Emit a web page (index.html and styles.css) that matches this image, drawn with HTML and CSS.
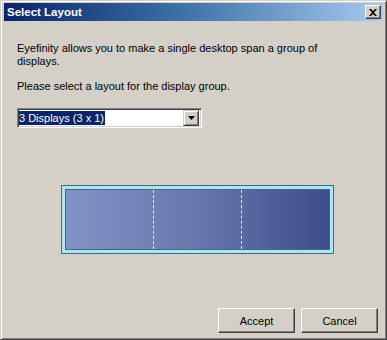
FILE: index.html
```html
<!DOCTYPE html>
<html>
<head>
<meta charset="utf-8">
<link rel="stylesheet" href="styles.css">
</head>
<body>
<div class="window">
  <div class="titlebar">
    <span class="title">Select Layout</span>
    <span class="close"><svg width="8" height="7" viewBox="0 0 8 7"><path d="M0 0h2l2 2 2-2h2L5 3.5 8 7H6L4 5 2 7H0l3-3.5z" fill="#000"/></svg></span>
  </div>
  <div class="content">
    <p class="intro">Eyefinity allows you to make a single desktop span a group of displays.</p>
    <p class="prompt">Please select a layout for the display group.</p>
    <div class="select">
      <span class="value"><span class="sel">3 Displays (3 x 1)</span></span>
      <span class="arrow"><svg width="7" height="4" viewBox="0 0 7 4"><path d="M0 0h7L3.5 4z" fill="#000"/></svg></span>
    </div>
    <div class="preview-area">
      <div class="preview">
        <div class="inner">
          <div class="cell"></div>
          <div class="cell"></div>
          <div class="cell last"></div>
        </div>
      </div>
    </div>
    <div class="buttons">
      <button class="btn">Accept</button>
      <button class="btn">Cancel</button>
    </div>
  </div>
</div>
</body>
</html>
```
FILE: styles.css
```css
html, body { margin: 0; padding: 0; }
body { width: 387px; height: 340px; background: #d4d0c8; font-family: "Liberation Sans", Arial, sans-serif; font-size: 11px; color: #000; }
.window {
  box-sizing: border-box; width: 387px; height: 340px;
  background: #d4d0c8;
  border-top: 1px solid #d4d0c8; border-left: 1px solid #d4d0c8;
  border-right: 1px solid #404040; border-bottom: 1px solid #404040;
  box-shadow: inset 1px 1px 0 #fff, inset -1px -1px 0 #808080;
  padding: 2px 3px 3px 3px;
  display: flex; flex-direction: column;
}
.titlebar {
  height: 18px; display: flex; align-items: center; justify-content: space-between;
  background: linear-gradient(to right, #0a246a 0%, #3a6ea5 45%, #a6caf0 100%);
  padding: 0 2px 0 3px;
}
.title { color: #fff; font-weight: bold; font-size: 11.5px; }
.close {
  width: 16px; height: 14px; box-sizing: border-box; background: #d4d0c8;
  border-top: 1px solid #fff; border-left: 1px solid #fff;
  border-right: 1px solid #404040; border-bottom: 1px solid #404040;
  box-shadow: inset -1px -1px 0 #808080;
  display: flex; align-items: center; justify-content: center;
}
.content { flex: 1; padding: 0 0 0 13px; display: flex; flex-direction: column; }
p { margin: 0; }
.intro { margin-top: 21px; width: 320px; line-height: 13px; }
.prompt { margin-top: 12px; line-height: 13px; }
.select {
  margin-top: 15px; width: 185px; height: 20px; box-sizing: border-box;
  background: #fff; display: flex; align-items: center; justify-content: space-between;
  border-top: 1px solid #808080; border-left: 1px solid #808080;
  border-right: 1px solid #fff; border-bottom: 1px solid #fff;
  box-shadow: inset 1px 1px 0 #404040, inset -1px -1px 0 #d4d0c8;
  padding: 2px 2px 2px 1px;
}
.value { flex: 1; display: flex; }
.sel { background: #0a246a; color: #fff; padding: 0 1px 0 0; line-height: 14px; }
.arrow {
  width: 16px; height: 16px; box-sizing: border-box; background: #d4d0c8;
  border-top: 1px solid #d4d0c8; border-left: 1px solid #d4d0c8;
  border-right: 1px solid #404040; border-bottom: 1px solid #404040;
  box-shadow: inset 1px 1px 0 #fff, inset -1px -1px 0 #808080;
  display: flex; align-items: center; justify-content: center;
}
.preview-area { flex: 1; display: flex; align-items: flex-start; padding-top: 57px; padding-left: 44px; }
.preview {
  width: 273px; height: 69px; box-sizing: border-box;
  border: 1px solid #3d6c80; background: #aee4f4; padding: 3px;
}
.inner {
  height: 100%; box-sizing: border-box; border: 1px solid #3d6c88;
  background: linear-gradient(to right, #8292c4 0%, #6878ae 50%, #3c4c8a 100%);
  display: flex;
}
.cell { flex: 1; border-right: 1px dashed #e8eefa; }
.cell.last { border-right: none; }
.buttons { display: flex; justify-content: flex-end; gap: 6px; padding: 0 5px 3px 0; }
.btn {
  width: 77px; height: 25px; box-sizing: border-box; background: #d4d0c8;
  font-family: "Liberation Sans", Arial, sans-serif; font-size: 11px; color: #000;
  border-top: 1px solid #fff; border-left: 1px solid #fff;
  border-right: 1px solid #404040; border-bottom: 1px solid #404040;
  box-shadow: inset -1px -1px 0 #808080;
  padding: 0; margin: 0;
}
```
